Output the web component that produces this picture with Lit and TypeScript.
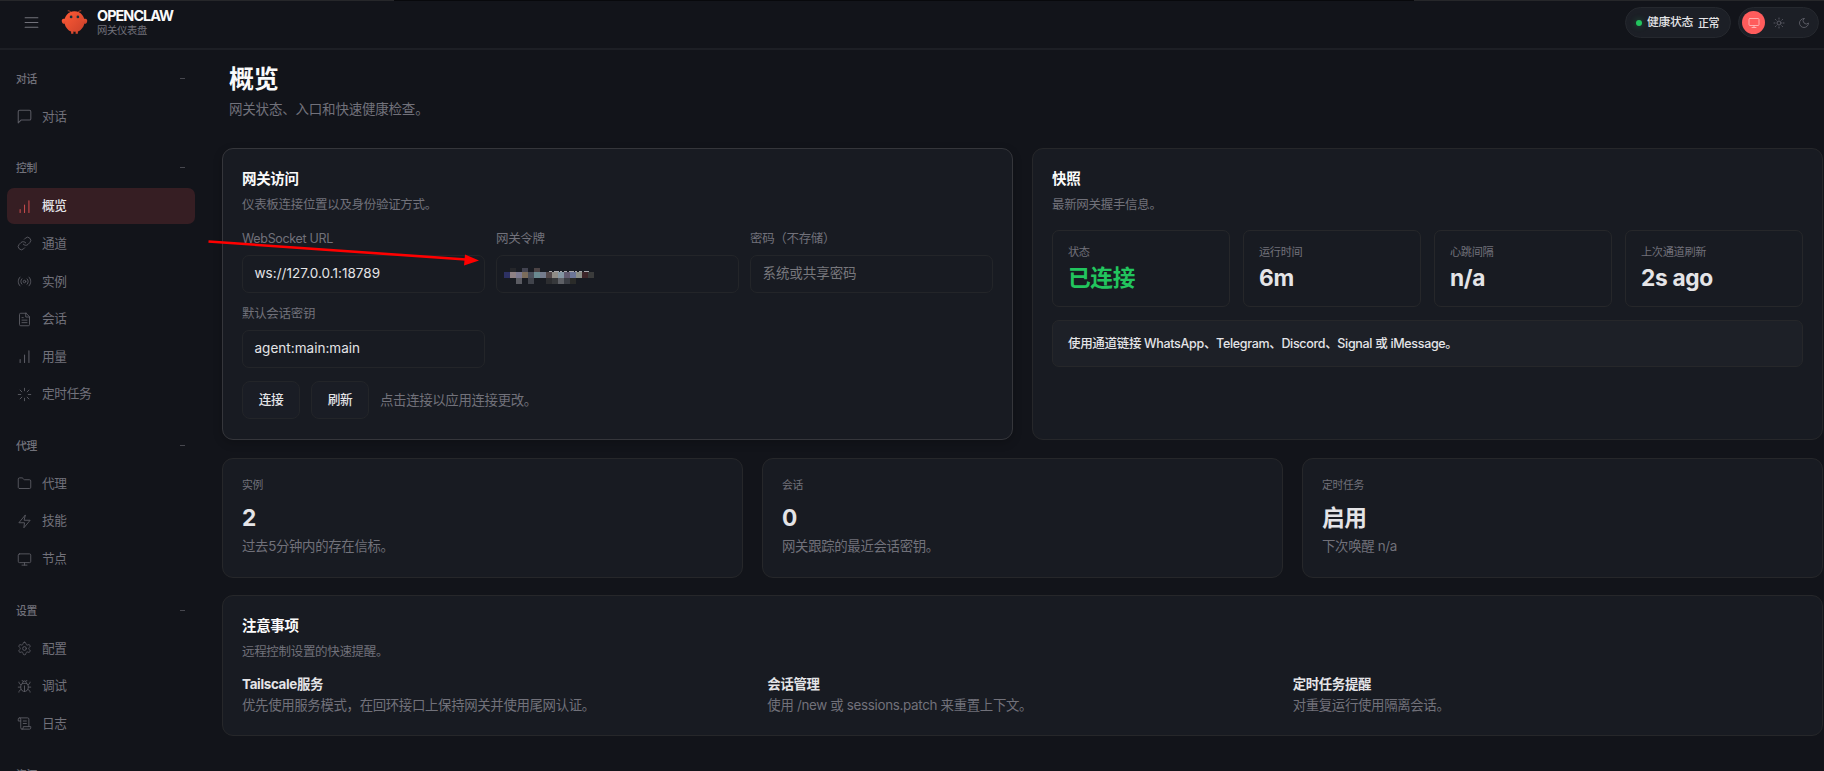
import { LitElement, html, css, svg } from "lit";
import { customElement } from "lit/decorators.js";

const icons: Record<string, unknown> = {
  menu: svg`<path d="M4 6h16M4 12h16M4 18h16"/>`,
  chat: svg`<path transform="translate(-1.4 -1.4) scale(1.12)" d="M21 15a2 2 0 0 1-2 2H7l-4 4V5a2 2 0 0 1 2-2h14a2 2 0 0 1 2 2z"/>`,
  bars: svg`<path transform="translate(-2 -2) scale(1.17)" d="M12 20V10M18 20V4M6 20v-4"/>`,
  link: svg`<path d="M10 13a5 5 0 0 0 7.54.54l3-3a5 5 0 0 0-7.07-7.07l-1.72 1.71"/><path d="M14 11a5 5 0 0 0-7.54-.54l-3 3a5 5 0 0 0 7.07 7.07l1.71-1.71"/>`,
  radio: svg`<circle cx="12" cy="12" r="2"/><path d="M4.9 19.1C1 15.2 1 8.8 4.9 4.9M7.8 16.2c-2.3-2.3-2.3-6.1 0-8.5M16.2 7.8c2.3 2.3 2.3 6.1 0 8.5M19.1 4.9C23 8.8 23 15.1 19.1 19"/>`,
  file: svg`<path d="M14.5 2H6a2 2 0 0 0-2 2v16a2 2 0 0 0 2 2h12a2 2 0 0 0 2-2V7.5L14.5 2z"/><path d="M14 2v6h6M16 13H8M16 17H8M10 9H8"/>`,
  loader: svg`<path d="M12 2v4M12 18v4M4.93 4.93l2.83 2.83M16.24 16.24l2.83 2.83M2 12h4M18 12h4M4.93 19.07l2.83-2.83M16.24 7.76l2.83-2.83"/>`,
  folder: svg`<path d="M4 20h16a2 2 0 0 0 2-2V8a2 2 0 0 0-2-2h-7.93a2 2 0 0 1-1.66-.9l-.82-1.2A2 2 0 0 0 7.93 3H4a2 2 0 0 0-2 2v13c0 1.1.9 2 2 2Z"/>`,
  zap: svg`<path d="M13 2 3 14h9l-1 8 10-12h-9z"/>`,
  monitor: svg`<rect x="2" y="3" width="20" height="14" rx="2"/><path d="M8 21h8M12 17v4"/>`,
  gear: svg`<path d="M12.22 2h-.44a2 2 0 0 0-2 2v.18a2 2 0 0 1-1 1.73l-.43.25a2 2 0 0 1-2 0l-.15-.08a2 2 0 0 0-2.73.73l-.22.38a2 2 0 0 0 .73 2.73l.15.1a2 2 0 0 1 1 1.72v.51a2 2 0 0 1-1 1.74l-.15.09a2 2 0 0 0-.73 2.73l.22.38a2 2 0 0 0 2.73.73l.15-.08a2 2 0 0 1 2 0l.43.25a2 2 0 0 1 1 1.73V20a2 2 0 0 0 2 2h.44a2 2 0 0 0 2-2v-.18a2 2 0 0 1 1-1.73l.43-.25a2 2 0 0 1 2 0l.15.08a2 2 0 0 0 2.73-.73l.22-.39a2 2 0 0 0-.73-2.73l-.15-.08a2 2 0 0 1-1-1.74v-.5a2 2 0 0 1 1-1.74l.15-.09a2 2 0 0 0 .73-2.73l-.22-.38a2 2 0 0 0-2.73-.73l-.15.08a2 2 0 0 1-2 0l-.43-.25a2 2 0 0 1-1-1.73V4a2 2 0 0 0-2-2z"/><circle cx="12" cy="12" r="3"/>`,
  bug: svg`<path d="m8 2 1.88 1.88M14.12 3.88 16 2M9 7.13v-1a3 3 0 1 1 6 0v1M12 20c-3.3 0-6-2.7-6-6v-3a4 4 0 0 1 4-4h4a4 4 0 0 1 4 4v3c0 3.3-2.7 6-6 6M12 20v-9M6.53 9C4.6 8.8 3 7.1 3 5M6 13H2M3 21c0-2.1 1.7-3.9 3.8-4M20.97 5c0 2.1-1.6 3.8-3.5 4M22 13h-4M17.2 17c2.1.1 3.8 1.9 3.8 4"/>`,
  scroll: svg`<path d="M8 21h12a2 2 0 0 0 2-2v-2H10v2a2 2 0 1 1-4 0V5a2 2 0 1 0-4 0v3h4M19 17V5a2 2 0 0 0-2-2H4M15 8h-5M15 12h-5"/>`,
  sun: svg`<circle cx="12" cy="12" r="4"/><path d="M12 2v2M12 20v2M4.93 4.93l1.41 1.41M17.66 17.66l1.41 1.41M2 12h2M20 12h2M6.34 17.66l-1.41 1.41M19.07 4.93l-1.41 1.41"/>`,
  moon: svg`<path d="M12 3a6.36 6.36 0 0 0 9 9 9 9 0 1 1-9-9Z"/>`,
};
const icon = (name: string) => html`<svg class="ico" viewBox="0 0 24 24">${icons[name]}</svg>`;

const nav = [
  { title: "对话", items: [["chat", "对话"]] },
  { title: "控制", items: [["bars", "概览"], ["link", "通道"], ["radio", "实例"], ["file", "会话"], ["bars", "用量"], ["loader", "定时任务"]] },
  { title: "代理", items: [["folder", "代理"], ["zap", "技能"], ["monitor", "节点"]] },
  { title: "设置", items: [["gear", "配置"], ["bug", "调试"], ["scroll", "日志"]] },
  { title: "资源", items: [] },
];
const snapshot = [["状态", "已连接"], ["运行时间", "6m"], ["心跳间隔", "n/a"], ["上次通道刷新", "2s ago"]];
const totals = [
  ["实例", "2", "过去5分钟内的存在信标。"],
  ["会话", "0", "网关跟踪的最近会话密钥。"],
  ["定时任务", "启用", "下次唤醒 n/a"],
];
const notes = [
  ["Tailscale服务", "优先使用服务模式，在回环接口上保持网关并使用尾网认证。"],
  ["会话管理", "使用 /new 或 sessions.patch 来重置上下文。"],
  ["定时任务提醒", "对重复运行使用隔离会话。"],
];
/* Redacted token: [column, row, colour], every cell is 6px wide. */
const mosaic: [number, number, string][] = [
  [1, 0, "#25262a"], [3, 0, "#424350"], [5, 0, "#4b4345"],
  [0, 1, "#2d3163"], [1, 1, "#8e8184"], [2, 1, "#7c7a91"], [3, 1, "#7b6d5c"], [4, 1, "#4b505c"], [5, 1, "#6a8a91"], [6, 1, "#747c8d"],
  [7, 1, "#524749"], [8, 1, "#908d87"], [9, 1, "#8496a3"], [10, 1, "#625b70"], [11, 1, "#6c7698"], [12, 1, "#8b8f88"], [13, 1, "#3d2529"], [14, 1, "#3a3b3b"],
  [2, 2, "#5a5b62"], [4, 2, "#40434b"], [7, 2, "#2c2d30"], [8, 2, "#36383b"], [9, 2, "#5e6066"], [10, 2, "#3a3d44"], [11, 2, "#2a2b29"],
];

@customElement("app-root")
export class AppRoot extends LitElement {
  static styles = css`
    :host {
      display: block;
      height: 771px;
      overflow: hidden;
      position: relative;
      background: #12141a;
      color: #e4e4e7;
      font-family: Inter, "Noto Sans CJK SC", sans-serif;
      letter-spacing: -0.02em;
    }
    * { box-sizing: border-box; }
    .ico { display: block; width: 15px; height: 15px; flex: none; fill: none; stroke: currentColor; stroke-width: 1.5; stroke-linecap: round; stroke-linejoin: round; }
    .top { height: 50px; display: flex; align-items: center; border-bottom: 2px solid #1d1f25; padding: 1px 5px 4px 22px; background: linear-gradient(90deg, #26272a 394px, #08090c 394px 1414px, #26272a 1414px) top / 100% 1px no-repeat; }
    .top .menu { width: 19px; height: 19px; color: #71717a; }
    .logo { display: block; width: 27px; height: 27px; margin: 0 9px 0 20px; }
    .brand { display: flex; flex-direction: column; flex: 1; }
    .name { font-size: 14.4px; line-height: 16px; font-weight: 700; letter-spacing: -0.065em; color: #fafafa; }
    .tag { font-size: 10.3px; line-height: 13px; color: #71717a; }
    .pill { display: flex; align-items: center; height: 31px; border: 1px solid #25282e; background: #1c1f26; border-radius: 16px; }
    .health { width: 106px; padding-left: 10px; font-size: 11.8px; font-weight: 500; line-height: 16px; margin-right: 7px; }
    .health span { padding-bottom: 1px; }
    .dot { width: 6px; height: 6px; border-radius: 50%; background: #22c55e; box-shadow: 0 0 6px #22c55e66; margin-right: 5px; }
    .health .ok { font-size: 11px; margin-left: 5px; padding: 1px 0 0; }
    .theme { width: 81px; padding-left: 3px; color: #71717a; gap: 2px; }
    .mode { width: 23px; height: 23px; display: grid; place-items: center; border-radius: 50%; }
    .mode .ico { width: 12px; height: 12px; stroke-width: 1.8; opacity: .8; }
    .mode.on { background: #ff5c5c; color: #ffd0d0; }
    .body { display: flex; align-items: flex-start; }
    .side { width: 222px; flex: none; padding: 15px 27px 0 7px; display: flex; flex-direction: column; gap: 19.6px; color: #71717a; }
    .sec { display: flex; flex-direction: column; gap: 1.6px; }
    .sech { height: 28px; margin-bottom: 4.3px; display: flex; align-items: center; justify-content: space-between; padding: 0 10px 1px 9px; font-size: 10.8px; font-weight: 500; }
    .sech span { padding-bottom: 1px; }
    .minus { width: 5px; height: 1px; background: #46474e; }
    .item { height: 36px; display: flex; align-items: center; gap: 10px; padding-left: 10px; border-radius: 7px; font-size: 12.7px; }
    .item span { padding-bottom: 3px; }
    .item .ico { opacity: .75; }
    .item.on { background: #361e23; color: #e4e4e7; font-weight: 500; }
    .item.on .ico { color: #ff5c5c; opacity: .7; }
    .main { flex: 1; min-width: 0; padding: 14px 0 0; }
    .title { font-size: 25px; line-height: 30px; font-weight: 700; color: #fafafa; padding-left: 7px; }
    .lead { font-size: 13.5px; line-height: 20px; letter-spacing: -0.015em; color: #71717a; padding: 5px 0 0 7px; margin-bottom: 29px; }
    .grid { display: grid; gap: 19px; padding-right: 1px; }
    .two { grid-template-columns: 1fr 1fr; height: 292px; }
    .three { grid-template-columns: 1fr 1fr 1fr; height: 120px; margin: 17.5px 0; }
    .card { border: 1px solid #26272a; border-radius: 11px; background: #181b22; padding: 20px 19px 0; min-width: 0; }
    .card.hl { border-color: #35363b; box-shadow: 0 3px 10px #0003; }
    .h { font-size: 14.5px; line-height: 20px; font-weight: 700; color: #fafafa; }
    .sub { font-size: 12.5px; line-height: 18px; margin-top: 7px; color: #71717a; }
    .form { display: grid; grid-template-columns: repeat(3, 242.8px); gap: 11.5px 11.2px; margin-top: 15px; }
    .field { display: flex; flex-direction: column; gap: 5.5px; }
    .lab { font-size: 12.5px; line-height: 20px; color: #71717a; }
    .inp { height: 38px; border: 1px solid #232529; border-radius: 7px; padding: 0 11.5px 2px; display: flex; align-items: center; font-size: 13.5px; letter-spacing: 0.002em; }
    .ph { color: #77777c; letter-spacing: -0.005em; padding-bottom: 3px; }
    .mos { display: block; width: 92px; height: 18px; margin: 5px 0 0 -4px; }
    .acts { display: flex; align-items: center; margin-top: 13.5px; gap: 11px; font-size: 13.4px; color: #71717a; }
    .acts span { padding-bottom: 3px; }
    .btn { width: 58px; height: 38px; border: 1px solid #232529; border-radius: 8px; display: grid; place-items: center; background: #1a1d25; color: #e4e4e7; font-size: 12.7px; font-weight: 500; }
    .stats { display: grid; grid-template-columns: repeat(4, 1fr); gap: 13px; margin-top: 16px; }
    .stat { height: 77px; border: 1px solid #26272a; border-radius: 7px; padding: 12px 15px 0; }
    .slab { font-size: 11.2px; line-height: 18px; color: #71717a; }
    .sval { font-size: 22.7px; line-height: 30px; font-weight: 700; margin-top: 2px; }
    .sval.good { color: #22c55e; }
    .call { height: 47px; margin-top: 12.5px; border: 1px solid #26272a; border-radius: 7px; background: #1d2027; padding: 0 15px 2px; display: flex; align-items: center; font-size: 12.5px; font-weight: 500; }
    .tot { padding-top: 18px; }
    .tot .slab { font-size: 10.8px; }
    .tot .sval { margin-top: 8px; }
    .det { font-size: 13.4px; line-height: 20px; color: #71717a; }
    .tot .det { margin-top: 3.5px; }
    .notes { height: 141px; margin-right: 1px; }
    .ncols { display: grid; grid-template-columns: repeat(3, 1fr); gap: 15px; margin-top: 13px; }
    .nh { font-size: 13.4px; line-height: 20px; font-weight: 700; }
    .ncols .det { padding-top: 1px; }
    .arrow { position: absolute; left: 200px; top: 230px; width: 290px; height: 50px; }
  `;

  render() {
    return html`
      <header class="top">
        <svg class="ico menu" viewBox="0 0 24 24">${icons.menu}</svg>
        <svg class="logo" viewBox="0 0 120 120">
          <defs><linearGradient id="g" x1="0" y1="0" x2="1" y2="1"><stop offset="0" stop-color="#ff5a36"/><stop offset="1" stop-color="#c8402a"/></linearGradient></defs>
          <path fill="url(#g)" d="M60 10c-30 0-45 25-45 45s15 40 30 45v10h10v-10s5 2 10 0v10h10v-10c15-5 30-25 30-45S90 10 60 10Z"/>
          <path fill="url(#g)" d="M20 45C5 40 0 50 5 60s15 5 20-5 0-10-5-10ZM100 45c15-5 20 5 15 15s-15 5-20-5 0-10 5-10Z"/>
          <path d="M45 15Q35 5 30 8M75 15Q85 5 90 8" stroke="#ff5a36" stroke-width="3" fill="none"/>
          <circle cx="45" cy="35" r="6" fill="#17303a"/><circle cx="75" cy="35" r="6" fill="#17303a"/>
        </svg>
        <div class="brand"><span class="name">OPENCLAW</span><span class="tag">网关仪表盘</span></div>
        <div class="pill health"><i class="dot"></i><span>健康状态</span><span class="ok">正常</span></div>
        <div class="pill theme">
          <span class="mode on">${icon("monitor")}</span><span class="mode">${icon("sun")}</span><span class="mode">${icon("moon")}</span>
        </div>
      </header>
      <div class="body">
        <nav class="side">
          ${nav.map((s) => html`<div class="sec">
            <div class="sech"><span>${s.title}</span><i class="minus"></i></div>
            ${s.items.map(([i, t]) => html`<div class="item ${t === "概览" ? "on" : ""}">${icon(i)}<span>${t}</span></div>`)}
          </div>`)}
        </nav>
        <main class="main">
          <div class="title">概览</div>
          <div class="lead">网关状态、入口和快速健康检查。</div>
          <div class="grid two">
            <section class="card hl">
              <div class="h">网关访问</div>
              <div class="sub">仪表板连接位置以及身份验证方式。</div>
              <div class="form">
                <div class="field"><span class="lab">WebSocket URL</span><div class="inp">ws://127.0.0.1:18789</div></div>
                <div class="field"><span class="lab">网关令牌</span><div class="inp">
                  <svg class="mos" viewBox="0 0 92 18" shape-rendering="crispEdges">
                    ${mosaic.map(([c, r, f]) => svg`<rect x=${c * 6} y=${[2, 6, 12][r]} width="6" height=${r ? 6 : 4} fill=${f}/>`)}
                    <path d="M45 5.500h40" stroke="#a8a8ac" stroke-dasharray="3 2 5 1 2 2"/>
                  </svg></div></div>
                <div class="field"><span class="lab">密码（不存储）</span><div class="inp ph">系统或共享密码</div></div>
                <div class="field"><span class="lab">默认会话密钥</span><div class="inp">agent:main:main</div></div>
              </div>
              <div class="acts"><span class="btn">连接</span><span class="btn">刷新</span><span>点击连接以应用连接更改。</span></div>
            </section>
            <section class="card">
              <div class="h">快照</div>
              <div class="sub">最新网关握手信息。</div>
              <div class="stats">
                ${snapshot.map(([l, v], i) => html`<div class="stat"><div class="slab">${l}</div><div class="sval ${i ? "" : "good"}">${v}</div></div>`)}
              </div>
              <div class="call">使用通道链接 WhatsApp、Telegram、Discord、Signal 或 iMessage。</div>
            </section>
          </div>
          <div class="grid three">
            ${totals.map(([l, v, d]) => html`<section class="card tot"><div class="slab">${l}</div><div class="sval">${v}</div><div class="det">${d}</div></section>`)}
          </div>
          <section class="card notes">
            <div class="h">注意事项</div>
            <div class="sub">远程控制设置的快速提醒。</div>
            <div class="ncols">${notes.map(([h, d]) => html`<div><div class="nh">${h}</div><div class="det">${d}</div></div>`)}</div>
          </section>
        </main>
      </div>
      <svg class="arrow" viewBox="200 230 290 50"><path d="M208.500 241.500 466 259.500" stroke="#f00" stroke-width="2.600"/><path d="M465 254.500 479 260.500 464 265.500Z" fill="#f00"/></svg>
    `;
  }
}
